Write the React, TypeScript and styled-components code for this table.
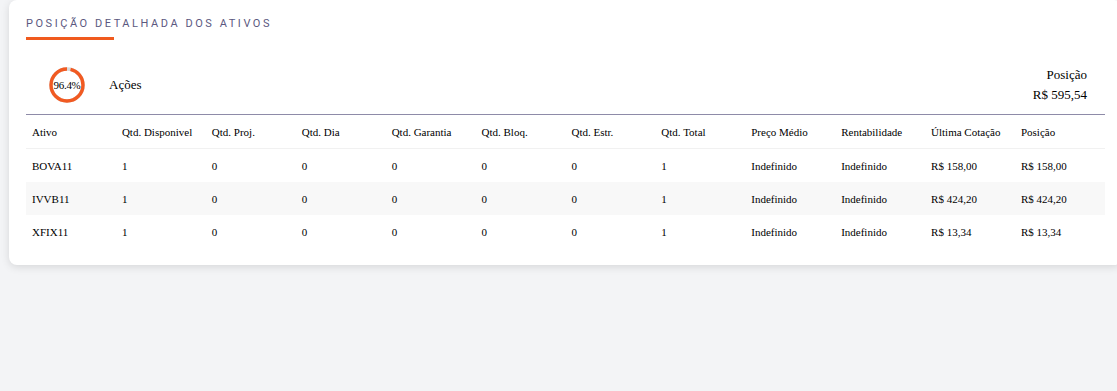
import React from "react";
import styled, { createGlobalStyle } from "styled-components";

const GlobalStyle = createGlobalStyle`
  html, body {
    margin: 0;
    padding: 0;
    background: #f3f4f6;
    overflow: hidden;
  }
  body {
    font-family: "Liberation Serif", "Times New Roman", serif;
    color: #000;
  }
`;

const Page = styled.div`
  height: 391px;
`;

const Card = styled.section`
  margin-left: 9px;
  width: 1113px;
  box-sizing: border-box;
  background: #fff;
  border-radius: 8px;
  box-shadow: 0 2px 8px rgba(0, 0, 0, 0.12);
  padding: 17px 17px 17px;
`;

const Title = styled.h2`
  margin: 0;
  font-family: Roboto, "Liberation Sans", sans-serif;
  font-weight: 400;
  font-size: 11px;
  line-height: 14px;
  letter-spacing: 2.55px;
  color: #5b5880;
`;

const Underline = styled.div`
  width: 88px;
  height: 3px;
  margin-top: 6px;
  background: #f05a1e;
`;

const Summary = styled.div`
  display: flex;
  align-items: center;
  justify-content: space-between;
  box-sizing: border-box;
  height: 75px;
  padding: 15px 18px 0 23px;
  border-bottom: 1px solid #8e8ba8;
`;

const Category = styled.div`
  display: flex;
  align-items: center;
  gap: 24px;
  font-size: 13px;
`;

const DonutBox = styled.div`
  position: relative;
  width: 36px;
  height: 36px;
`;

const DonutLabel = styled.span`
  position: absolute;
  inset: 0;
  display: flex;
  align-items: center;
  justify-content: center;
  font-size: 11px;
  letter-spacing: -0.3px;
`;

const Total = styled.div`
  text-align: right;
  font-size: 13px;
  line-height: 20px;
`;

const Table = styled.table`
  width: 100%;
  border-collapse: collapse;
  table-layout: fixed;
  font-size: 11px;
`;

const Th = styled.th`
  height: 33px;
  padding: 0 6px;
  text-align: left;
  font-weight: 400;
  white-space: nowrap;
  border-bottom: 1px solid #f1f1f1;
`;

const Row = styled.tr<{ $shaded: boolean }>`
  background: ${(p) => (p.$shaded ? "#f8f8f8" : "transparent")};
`;

const Td = styled.td`
  height: 33px;
  padding: 0 6px;
  white-space: nowrap;
`;

function Donut({ value }: { value: number }) {
  const r = 16;
  const c = 2 * Math.PI * r;
  const gap = c * (1 - value / 100);
  return (
    <DonutBox>
      <svg width="36" height="36" viewBox="0 0 36 36">
        <g transform="rotate(-90 18 18)">
          <circle cx="18" cy="18" r={r} fill="none" stroke="#d9d9d9" strokeWidth="3.4" />
          <circle
            cx="18"
            cy="18"
            r={r}
            fill="none"
            stroke="#f15a22"
            strokeWidth="3.4"
            strokeDasharray={`${c - gap} ${c}`}
            strokeDashoffset={-gap}
          />
        </g>
      </svg>
      <DonutLabel>{value}%</DonutLabel>
    </DonutBox>
  );
}

const columns = [
  "Ativo",
  "Qtd. Disponivel",
  "Qtd. Proj.",
  "Qtd. Dia",
  "Qtd. Garantia",
  "Qtd. Bloq.",
  "Qtd. Estr.",
  "Qtd. Total",
  "Preço Médio",
  "Rentabilidade",
  "Última Cotação",
  "Posição",
];

const rows = [
  ["BOVA11", "1", "0", "0", "0", "0", "0", "1", "Indefinido", "Indefinido", "R$ 158,00", "R$ 158,00"],
  ["IVVB11", "1", "0", "0", "0", "0", "0", "1", "Indefinido", "Indefinido", "R$ 424,20", "R$ 424,20"],
  ["XFIX11", "1", "0", "0", "0", "0", "0", "1", "Indefinido", "Indefinido", "R$ 13,34", "R$ 13,34"],
];

export default function App() {
  return (
    <Page>
      <GlobalStyle />
      <Card>
        <Title>POSIÇÃO DETALHADA DOS ATIVOS</Title>
        <Underline />
        <Summary>
          <Category>
            <Donut value={96.4} />
            <span>Ações</span>
          </Category>
          <Total>
            <div>Posição</div>
            <div>R$ 595,54</div>
          </Total>
        </Summary>
        <Table>
          <thead>
            <tr>
              {columns.map((c) => (
                <Th key={c}>{c}</Th>
              ))}
            </tr>
          </thead>
          <tbody>
            {rows.map((r, i) => (
              <Row key={r[0]} $shaded={i === 1}>
                {r.map((v, j) => (
                  <Td key={j}>{v}</Td>
                ))}
              </Row>
            ))}
          </tbody>
        </Table>
      </Card>
    </Page>
  );
}
